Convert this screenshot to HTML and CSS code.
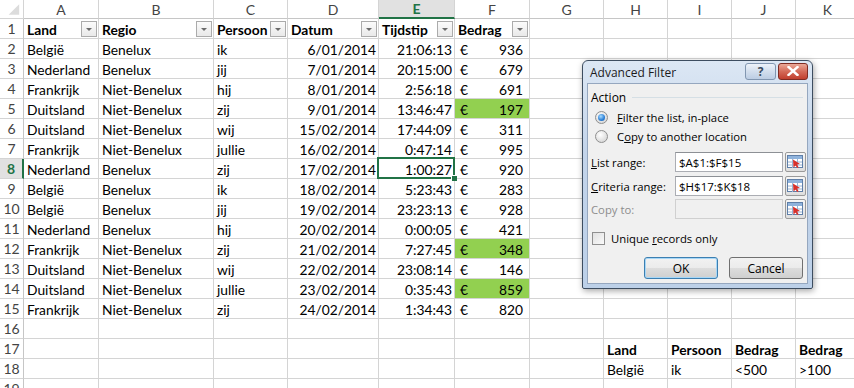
FILE: index.html
```html
<!DOCTYPE html>
<html lang="nl">
<head>
<meta charset="utf-8">
<title>Advanced Filter</title>
<link rel="stylesheet" href="styles.css">
</head>
<body>
<div class="sheet">
  <div class="corner"><svg width="24" height="19" viewBox="0 0 24 19"><polygon points="20,4 20,15 9,15" fill="#dcdcdc"/></svg></div>
  <div class="h">A</div><div class="h">B</div><div class="h">C</div><div class="h">D</div><div class="h sel">E</div><div class="h">F</div><div class="h">G</div><div class="h">H</div><div class="h">I</div><div class="h">J</div><div class="h">K</div>

  <div class="r">1</div>
  <div class="c b f"><span>Land</span><i class="fb"></i></div>
  <div class="c b f"><span>Regio</span><i class="fb"></i></div>
  <div class="c b f"><span>Persoon</span><i class="fb"></i></div>
  <div class="c b f"><span>Datum</span><i class="fb"></i></div>
  <div class="c b f"><span>Tijdstip</span><i class="fb"></i></div>
  <div class="c b f"><span>Bedrag</span><i class="fb"></i></div>
  <div class="c"></div><div class="c"></div><div class="c"></div><div class="c"></div><div class="c"></div>

  <div class="r">2</div>
  <div class="c">België</div><div class="c">Benelux</div><div class="c">ik</div><div class="c n">6/01/2014</div><div class="c n">21:06:13</div><div class="c eur"><span>€</span><span>936</span></div>
  <div class="c"></div><div class="c"></div><div class="c"></div><div class="c"></div><div class="c"></div>

  <div class="r">3</div>
  <div class="c">Nederland</div><div class="c">Benelux</div><div class="c">jij</div><div class="c n">7/01/2014</div><div class="c n">20:15:00</div><div class="c eur"><span>€</span><span>679</span></div>
  <div class="c"></div><div class="c"></div><div class="c"></div><div class="c"></div><div class="c"></div>

  <div class="r">4</div>
  <div class="c">Frankrijk</div><div class="c">Niet-Benelux</div><div class="c">hij</div><div class="c n">8/01/2014</div><div class="c n">2:56:18</div><div class="c eur"><span>€</span><span>691</span></div>
  <div class="c"></div><div class="c"></div><div class="c"></div><div class="c"></div><div class="c"></div>

  <div class="r">5</div>
  <div class="c">Duitsland</div><div class="c">Niet-Benelux</div><div class="c">zij</div><div class="c n">9/01/2014</div><div class="c n">13:46:47</div><div class="c eur g"><span>€</span><span>197</span></div>
  <div class="c"></div><div class="c"></div><div class="c"></div><div class="c"></div><div class="c"></div>

  <div class="r">6</div>
  <div class="c">Duitsland</div><div class="c">Niet-Benelux</div><div class="c">wij</div><div class="c n">15/02/2014</div><div class="c n">17:44:09</div><div class="c eur"><span>€</span><span>311</span></div>
  <div class="c"></div><div class="c"></div><div class="c"></div><div class="c"></div><div class="c"></div>

  <div class="r">7</div>
  <div class="c">Frankrijk</div><div class="c">Niet-Benelux</div><div class="c">jullie</div><div class="c n">16/02/2014</div><div class="c n">0:47:14</div><div class="c eur"><span>€</span><span>995</span></div>
  <div class="c"></div><div class="c"></div><div class="c"></div><div class="c"></div><div class="c"></div>

  <div class="r rsel">8</div>
  <div class="c">Nederland</div><div class="c">Benelux</div><div class="c">zij</div><div class="c n">17/02/2014</div><div class="c n active">1:00:27</div><div class="c eur"><span>€</span><span>920</span></div>
  <div class="c"></div><div class="c"></div><div class="c"></div><div class="c"></div><div class="c"></div>

  <div class="r">9</div>
  <div class="c">België</div><div class="c">Benelux</div><div class="c">ik</div><div class="c n">18/02/2014</div><div class="c n">5:23:43</div><div class="c eur"><span>€</span><span>283</span></div>
  <div class="c"></div><div class="c"></div><div class="c"></div><div class="c"></div><div class="c"></div>

  <div class="r">10</div>
  <div class="c">België</div><div class="c">Benelux</div><div class="c">jij</div><div class="c n">19/02/2014</div><div class="c n">23:23:13</div><div class="c eur"><span>€</span><span>928</span></div>
  <div class="c"></div><div class="c"></div><div class="c"></div><div class="c"></div><div class="c"></div>

  <div class="r">11</div>
  <div class="c">Nederland</div><div class="c">Benelux</div><div class="c">hij</div><div class="c n">20/02/2014</div><div class="c n">0:00:05</div><div class="c eur"><span>€</span><span>421</span></div>
  <div class="c"></div><div class="c"></div><div class="c"></div><div class="c"></div><div class="c"></div>

  <div class="r">12</div>
  <div class="c">Frankrijk</div><div class="c">Niet-Benelux</div><div class="c">zij</div><div class="c n">21/02/2014</div><div class="c n">7:27:45</div><div class="c eur g"><span>€</span><span>348</span></div>
  <div class="c"></div><div class="c"></div><div class="c"></div><div class="c"></div><div class="c"></div>

  <div class="r">13</div>
  <div class="c">Duitsland</div><div class="c">Niet-Benelux</div><div class="c">wij</div><div class="c n">22/02/2014</div><div class="c n">23:08:14</div><div class="c eur"><span>€</span><span>146</span></div>
  <div class="c"></div><div class="c"></div><div class="c"></div><div class="c"></div><div class="c"></div>

  <div class="r">14</div>
  <div class="c">Duitsland</div><div class="c">Niet-Benelux</div><div class="c">jullie</div><div class="c n">23/02/2014</div><div class="c n">0:35:43</div><div class="c eur g"><span>€</span><span>859</span></div>
  <div class="c"></div><div class="c"></div><div class="c"></div><div class="c"></div><div class="c"></div>

  <div class="r">15</div>
  <div class="c">Frankrijk</div><div class="c">Niet-Benelux</div><div class="c">zij</div><div class="c n">24/02/2014</div><div class="c n">1:34:43</div><div class="c eur"><span>€</span><span>820</span></div>
  <div class="c"></div><div class="c"></div><div class="c"></div><div class="c"></div><div class="c"></div>

  <div class="r">16</div>
  <div class="c"></div><div class="c"></div><div class="c"></div><div class="c"></div><div class="c"></div><div class="c"></div><div class="c"></div><div class="c"></div><div class="c"></div><div class="c"></div><div class="c"></div>

  <div class="r">17</div>
  <div class="c"></div><div class="c"></div><div class="c"></div><div class="c"></div><div class="c"></div><div class="c"></div><div class="c"></div>
  <div class="c b">Land</div><div class="c b">Persoon</div><div class="c b">Bedrag</div><div class="c b">Bedrag</div>

  <div class="r">18</div>
  <div class="c"></div><div class="c"></div><div class="c"></div><div class="c"></div><div class="c"></div><div class="c"></div><div class="c"></div>
  <div class="c">België</div><div class="c">ik</div><div class="c">&lt;500</div><div class="c">&gt;100</div>

  <div class="r">19</div>
  <div class="c"></div><div class="c"></div><div class="c"></div><div class="c"></div><div class="c"></div><div class="c"></div><div class="c"></div><div class="c"></div><div class="c"></div><div class="c"></div><div class="c"></div>
</div>

<div class="dlg">
  <div class="titlebar">
    <span class="title">Advanced Filter</span>
    <div class="tbtns">
      <div class="tb help">?</div>
      <div class="tb close"><svg width="12" height="10" viewBox="0 0 12 10"><path d="M1.5 1 L10.5 9 M10.5 1 L1.5 9" stroke="#fff" stroke-width="2.4" stroke-linecap="square"/></svg></div>
    </div>
  </div>
  <div class="panel">
    <div class="group"><span>Action</span><span class="rule"></span></div>
    <div class="opt"><span class="radio on"></span><span><u>F</u>ilter the list, in-place</span></div>
    <div class="opt"><span class="radio"></span><span>C<u>o</u>py to another location</span></div>
    <div class="range first"><span class="lbl"><u>L</u>ist range:</span><span class="inp">$A$1:$F$15</span><span class="pick"><svg width="17" height="14" viewBox="0 0 17 14"><rect x="0.5" y="0.5" width="15" height="12" fill="#fff" stroke="#5f7fa8"/><rect x="1" y="1" width="14" height="3" fill="#8fb3dc"/><path d="M1 7h14M1 10h14M5.5 4v9M10.5 4v9" stroke="#9ab4d4"/><path d="M6 4.5l7 4.5-3 .6 1.6 2.6-1.4.8-1.6-2.6-2.1 2z" fill="#d9302a"/></svg></span></div>
    <div class="range"><span class="lbl"><u>C</u>riteria range:</span><span class="inp">$H$17:$K$18</span><span class="pick"><svg width="17" height="14" viewBox="0 0 17 14"><rect x="0.5" y="0.5" width="15" height="12" fill="#fff" stroke="#5f7fa8"/><rect x="1" y="1" width="14" height="3" fill="#8fb3dc"/><path d="M1 7h14M1 10h14M5.5 4v9M10.5 4v9" stroke="#9ab4d4"/><path d="M6 4.5l7 4.5-3 .6 1.6 2.6-1.4.8-1.6-2.6-2.1 2z" fill="#d9302a"/></svg></span></div>
    <div class="range dis"><span class="lbl">Copy to:</span><span class="inp"></span><span class="pick"><svg width="17" height="14" viewBox="0 0 17 14"><rect x="0.5" y="0.5" width="15" height="12" fill="#fff" stroke="#5f7fa8"/><rect x="1" y="1" width="14" height="3" fill="#8fb3dc"/><path d="M1 7h14M1 10h14M5.5 4v9M10.5 4v9" stroke="#9ab4d4"/><path d="M6 4.5l7 4.5-3 .6 1.6 2.6-1.4.8-1.6-2.6-2.1 2z" fill="#d9302a"/></svg></span></div>
    <div class="chk"><span class="box"></span><span>Unique <u>r</u>ecords only</span></div>
    <div class="btns"><span class="btn def">OK</span><span class="btn">Cancel</span></div>
  </div>
</div>
</body>
</html>
```

FILE: styles.css
```css
html, body {
  margin: 0;
  padding: 0;
  background: #fff;
  overflow: hidden;
}
body {
  position: relative;
  width: 854px;
  height: 388px;
  font-family: Lato, "Open Sans", sans-serif;
  font-size: 13.8px;
  color: #000;
}
.sheet {
  display: grid;
  grid-template-columns: 24px 75px 115px 74px 91px 76px 75px 74px 64px 64px 64px 64px;
  grid-template-rows: 19px repeat(19, 20px);
  width: 860px;
  height: 388px;
  overflow: hidden;
}
.sheet > div {
  box-sizing: border-box;
  border-right: 1px solid #d4d4d4;
  border-bottom: 1px solid #d4d4d4;
  white-space: nowrap;
  overflow: visible;
  display: flex;
  align-items: center;
}
.corner {
  padding: 0;
}
.corner svg { display: block; }
.h {
  justify-content: center;
  color: #444;
  font-size: 14px;
  border-bottom-color: #c6c6c6 !important;
}
.h.sel {
  background: #e1e1e1;
  color: #217346;
  font-weight: 700;
  border-bottom: 2px solid #217346 !important;
}
.r {
  justify-content: center;
  color: #444;
  font-size: 14px;
  border-right-color: #c6c6c6 !important;
}
.r.rsel {
  background: #e1e1e1;
  color: #217346;
  font-weight: 700;
  border-right: 2px solid #217346 !important;
}
.c {
  padding: 1px 2px 0 3px;
  position: relative;
}
.b { font-weight: 700; }
.n { justify-content: flex-end; }
.eur {
  justify-content: space-between;
  padding: 1px 6px 0 5px;
}
.g { background: #92d050; }
.f { justify-content: space-between; padding-right: 1px; }
.fb {
  width: 14px;
  height: 14px;
  border: 1px solid #ababab;
  background: linear-gradient(#fbfbfb, #e9e9e9);
  position: relative;
  flex: none;
}
.fb::after {
  content: "";
  position: absolute;
  left: 4px;
  top: 6px;
  border-left: 3px solid transparent;
  border-right: 3px solid transparent;
  border-top: 3px solid #6b6b6b;
}
.active::after {
  content: "";
  position: absolute;
  left: -2px;
  top: -2px;
  right: -1px;
  bottom: -1px;
  border: 2px solid #217346;
}
.active::before {
  content: "";
  position: absolute;
  right: -3px;
  bottom: -3px;
  width: 5px;
  height: 5px;
  background: #217346;
  border-left: 1px solid #fff;
  border-top: 1px solid #fff;
  z-index: 2;
}

/* dialog */
.dlg {
  position: absolute;
  left: 582px;
  top: 60px;
  width: 231px;
  height: 229px;
  box-sizing: border-box;
  border: 1px solid #3d4d60;
  border-radius: 6px 6px 2px 2px;
  background: linear-gradient(#dce7f4, #c3d4ea 40%, #bcd0e8);
  padding: 0 4px 4px;
  display: flex;
  flex-direction: column;
  font-family: "Open Sans", "Noto Sans", sans-serif;
  font-size: 11.3px;
  box-shadow: 1px 2px 6px rgba(0,0,0,.35);
}
.titlebar {
  height: 22px;
  display: flex;
  align-items: center;
  justify-content: space-between;
  padding-left: 3px;
}
.title {
  font-size: 12px;
  color: #1c1c1c;
}
.tbtns {
  display: flex;
  gap: 2px;
  margin-top: -2px;
}
.tb {
  height: 17px;
  box-sizing: border-box;
  border-radius: 3px;
  display: flex;
  align-items: center;
  justify-content: center;
}
.help {
  width: 31px;
  border: 1px solid #8196b0;
  background: linear-gradient(#eef3fa, #d2deed 50%, #bccde3);
  color: #3b4b5e;
  font-weight: 700;
  font-size: 12px;
}
.close {
  width: 30px;
  border: 1px solid #7e2b22;
  background: linear-gradient(#eaa898, #d46a58 50%, #c13f2e);
}
.close svg { display: block; }
.panel {
  flex: 1;
  background: #f0f0f0;
  border: 1px solid #95a7bf;
  padding: 5px 4px 0 3px;
  display: flex;
  flex-direction: column;
  color: #000;
}
.group {
  height: 16px;
  display: flex;
  align-items: center;
  gap: 6px;
  font-size: 12px;
}
.rule {
  flex: 1;
  height: 0;
  border-top: 1px solid #d5dfe5;
}
.opt {
  height: 19px;
  display: flex;
  align-items: center;
  gap: 9px;
  padding-left: 4px;
}
.group + .opt { margin-top: 3px; }
.radio {
  width: 13px;
  height: 13px;
  box-sizing: border-box;
  border-radius: 50%;
  border: 1px solid #8f8f8f;
  background: radial-gradient(circle at 40% 35%, #ffffff, #dcdcdc 70%);
  position: relative;
  flex: none;
}
.radio.on::after {
  content: "";
  position: absolute;
  left: 2px;
  top: 2px;
  width: 7px;
  height: 7px;
  border-radius: 50%;
  background: radial-gradient(circle at 40% 35%, #a8dcff, #2a7ed6 60%, #1d5fa8);
}
.range {
  height: 20px;
  display: grid;
  grid-template-columns: 82px 108px 21px;
  column-gap: 2px;
  align-items: center;
  margin-top: 4px;
}
.range.first { margin-top: 6px; }
.range.dis { margin-top: 3px; }
.lbl { white-space: nowrap; }
.inp {
  height: 20px;
  box-sizing: border-box;
  border: 1px solid #abadb3;
  border-top-color: #8d9095;
  background: #fff;
  padding-left: 3px;
  display: flex;
  align-items: center;
  font-size: 11.5px;
}
.dis .lbl { color: #8d8d8d; }
.dis .inp {
  background: #f0f0f0;
  border-color: #d0d0d0;
}
.pick {
  height: 20px;
  box-sizing: border-box;
  border: 1px solid #9a9a9a;
  border-radius: 2px;
  background: linear-gradient(#f6f6f6, #dedede);
  display: flex;
  align-items: center;
  justify-content: center;
}
.pick svg { display: block; }
.chk {
  margin-top: 11px;
  height: 16px;
  display: flex;
  align-items: center;
  gap: 6px;
  padding-left: 1px;
}
.box {
  width: 13px;
  height: 13px;
  box-sizing: border-box;
  border: 1px solid #8f8f8f;
  background: linear-gradient(135deg, #e0e0e0, #fafafa);
  flex: none;
}
.btns {
  margin-top: 11px;
  display: flex;
  justify-content: flex-end;
  gap: 11px;
  padding-right: 0;
}
.btn {
  width: 74px;
  height: 22px;
  box-sizing: border-box;
  border: 1px solid #707070;
  border-radius: 3px;
  background: linear-gradient(#f2f2f2, #ebebeb 50%, #dddddd 51%, #cfcfcf);
  display: flex;
  align-items: center;
  justify-content: center;
  font-size: 12px;
}
.btn.def {
  border-color: #3c7fb1;
  box-shadow: inset 0 0 0 1px #a7d7f7;
}
```
